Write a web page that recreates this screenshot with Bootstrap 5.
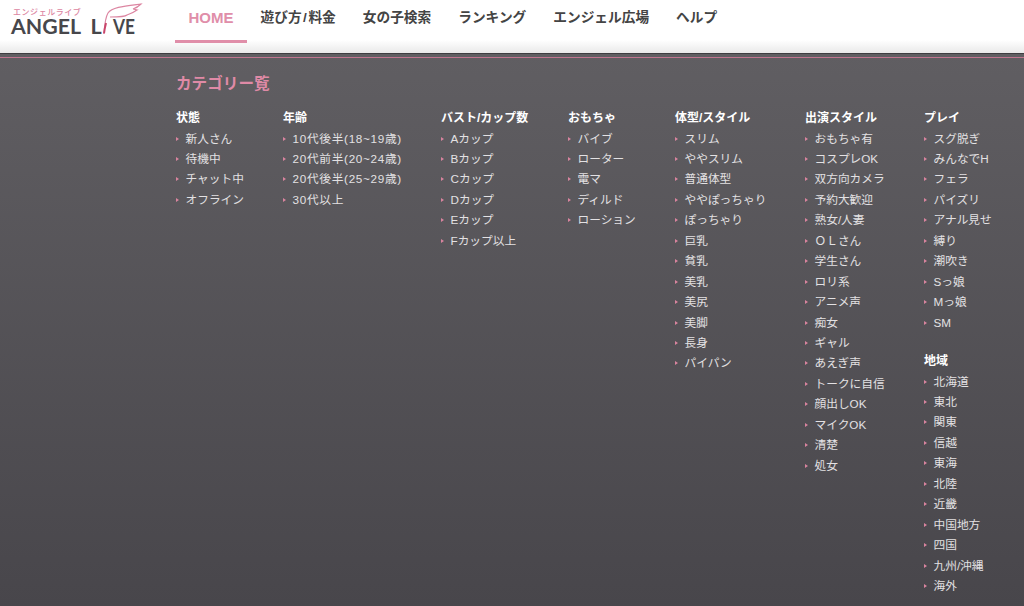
<!DOCTYPE html>
<html lang="ja"><head><meta charset="utf-8"><title>ANGEL LIVE</title>
<link href="https://cdn.jsdelivr.net/npm/bootstrap@5.3.0/dist/css/bootstrap.min.css" rel="stylesheet">
<style>
html,body{height:606px;overflow:hidden}
body{font-family:"Liberation Sans","Noto Sans CJK JP",sans-serif;background:#555357}
.topbar{height:53px;background:linear-gradient(#fff 0,#fff 40px,#e9e9e9 53px)}
.logo-box{width:175px;height:53px}
.logo-jp{font-family:"Noto Sans CJK JP",sans-serif;font-size:8px;font-weight:500;fill:#dc86a2;letter-spacing:.55px}
.logo-en{font-family:Lato,"Liberation Sans",sans-serif;font-size:21.500px;font-weight:700;fill:#47474b}
.menu-link{display:block;height:43px;padding:10px 13.5px 0;font-size:13.7px;font-weight:700;color:#444;text-decoration:none;line-height:16px}
.menu-link.on{color:#e08ea9;font-size:15px;border-bottom:3px solid #e08ea9}
.slash{margin:0 1.5px}
.panel{height:553px;background:linear-gradient(#605e62,#48464b);border-top:1px solid #3f3d41;padding-top:3px}
.rule{height:1px;background:#c0758f}
.inner{padding-left:176px}
.cat-title{font-size:15.6px;font-weight:700;color:#df8aa6;margin:17px 0 0;line-height:18px;height:34px}
.cat-col{flex:none}
.cat-col h6{font-size:12px;font-weight:700;color:#fff;margin:0;line-height:19.6px}
.cat-col h6.gap-top{margin-top:19px}
.cat-col ul{list-style:none;margin:0;padding:0}
.cat-col li{font-size:11.7px;line-height:20.45px;height:20.45px;color:#e3e1e3;padding-left:9.5px;position:relative;white-space:nowrap}
.cat-col li::before{content:"";position:absolute;left:0;top:8px;border-left:3px solid #d9849f;border-top:2px solid transparent;border-bottom:2px solid transparent}
.cat-col li.age{letter-spacing:.7px}
.w1{width:107px}.w2{width:158px}.w3{width:127px}.w4{width:107px}.w5{width:130px}.w6{width:119px}.w7{width:100px}
</style></head><body>
<header class="topbar d-flex">
<div class="logo-box">
<svg width="175" height="53" viewBox="0 0 175 53">
<text class="logo-jp" x="13" y="14.500">エンジェルライブ</text>
<text class="logo-en" x="11" y="33.500" textLength="70" lengthAdjust="spacingAndGlyphs">ANGEL</text>
<text class="logo-en" x="90.500" y="33.500">L</text>
<text class="logo-en" x="113" y="33.500" textLength="22" lengthAdjust="spacingAndGlyphs">VE</text>
<path d="M104 33.500C104.500 26 105 18 108 13C112 7 125 6 141 4C138 7 136 8 133 9C135 9 136 10 137 10C133 13 130 14 127 15C125 17 118 17 110 17" fill="none" stroke="#dc86a2" stroke-width="1.200"/>
<path d="M104 33.500C104.500 29 105 27 106 23" fill="none" stroke="#c9466b" stroke-width="2"/>
</svg>
</div>
<nav class="d-flex">
<a class="menu-link on" href="#">HOME</a><a class="menu-link" href="#">遊び方<span class="slash">/</span>料金</a><a class="menu-link" href="#">女の子検索</a><a class="menu-link" href="#">ランキング</a><a class="menu-link" href="#">エンジェル広場</a><a class="menu-link" href="#">ヘルプ</a>
</nav>
</header>
<main class="panel">
<div class="rule"></div>
<div class="inner">
<h2 class="cat-title">カテゴリー覧</h2>
<div class="d-flex">
<section class="cat-col w1"><h6>状態</h6><ul><li>新人さん</li><li>待機中</li><li>チャット中</li><li>オフライン</li></ul></section>
<section class="cat-col w2"><h6>年齢</h6><ul><li class="age">10代後半(18~19歳)</li><li class="age">20代前半(20~24歳)</li><li class="age">20代後半(25~29歳)</li><li class="age">30代以上</li></ul></section>
<section class="cat-col w3"><h6>バスト/カップ数</h6><ul><li>Aカップ</li><li>Bカップ</li><li>Cカップ</li><li>Dカップ</li><li>Eカップ</li><li>Fカップ以上</li></ul></section>
<section class="cat-col w4"><h6>おもちゃ</h6><ul><li>バイブ</li><li>ローター</li><li>電マ</li><li>ディルド</li><li>ローション</li></ul></section>
<section class="cat-col w5"><h6>体型/スタイル</h6><ul><li>スリム</li><li>ややスリム</li><li>普通体型</li><li>ややぽっちゃり</li><li>ぽっちゃり</li><li>巨乳</li><li>貧乳</li><li>美乳</li><li>美尻</li><li>美脚</li><li>長身</li><li>パイパン</li></ul></section>
<section class="cat-col w6"><h6>出演スタイル</h6><ul><li>おもちゃ有</li><li>コスプレOK</li><li>双方向カメラ</li><li>予約大歓迎</li><li>熟女/人妻</li><li>ＯＬさん</li><li>学生さん</li><li>ロリ系</li><li>アニメ声</li><li>痴女</li><li>ギャル</li><li>あえぎ声</li><li>トークに自信</li><li>顔出しOK</li><li>マイクOK</li><li>清楚</li><li>処女</li></ul></section>
<section class="cat-col w7"><h6>プレイ</h6><ul><li>スグ脱ぎ</li><li>みんなでH</li><li>フェラ</li><li>パイズリ</li><li>アナル見せ</li><li>縛り</li><li>潮吹き</li><li>Sっ娘</li><li>Mっ娘</li><li>SM</li></ul>
<h6 class="gap-top">地域</h6><ul><li>北海道</li><li>東北</li><li>関東</li><li>信越</li><li>東海</li><li>北陸</li><li>近畿</li><li>中国地方</li><li>四国</li><li>九州/沖縄</li><li>海外</li></ul></section>
</div>
</div>
</main>
<script src="https://cdn.jsdelivr.net/npm/bootstrap@5.3.0/dist/js/bootstrap.bundle.min.js"></script>
</body></html>
